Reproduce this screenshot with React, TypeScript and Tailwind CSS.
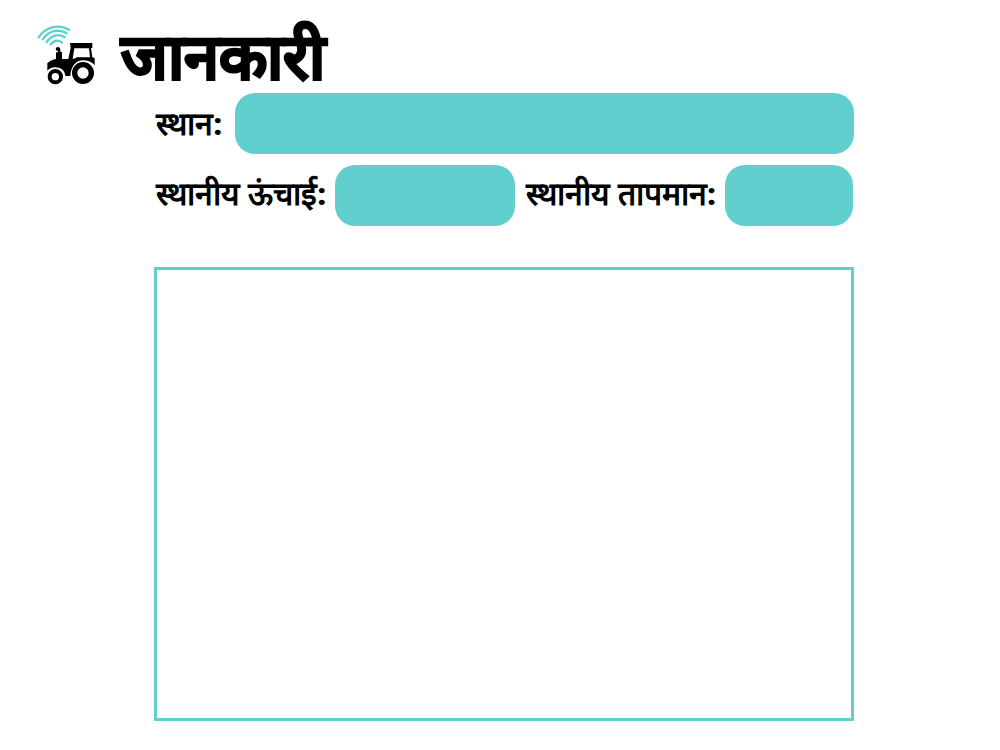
function TractorLogo() {
  return (
    <svg
      viewBox="0 0 225 210"
      className="h-[70px] w-[75px] shrink-0"
      role="img"
      aria-label="ट्रैक्टर"
    >
      <g fill="none" stroke="#61cfce" strokeWidth="7" strokeLinecap="round">
        <path d="M26 52 C46 21 86 11 117 29" />
        <path d="M38 58 C56 32 86 25 110 40" />
        <path d="M50 66 C64 45 85 40 104 52" />
        <path d="M62 73 C72 61 84 58 96 68" />
      </g>
      <path
        fill="#000"
        fillRule="evenodd"
        d="M120 69H187V84H183L187 112L194 114V136C186 126 174 121 159 121C139 121 123 138 121 168H106C104 150 92 142 75 142C65 142 57 146 52 152V130C60 121 70 118 78 117V97H84V92L79 92L77 84L83 81C89 81 91 84 91 90V96H96V117H115L122 84ZM133 85L128 116C131 117 134 116 137 115L139 112H180L177 85Z"
      />
      <circle cx="159" cy="159" r="25" fill="#fff" stroke="#000" strokeWidth="16" />
      <circle cx="76" cy="170" r="17" fill="#fff" stroke="#000" strokeWidth="12" />
    </svg>
  );
}

const labelClass = "shrink-0 whitespace-nowrap pl-0.5 text-[32px] leading-[58px] font-black";
const fieldClass = "h-[61px] rounded-[20px] bg-[#61cfce] px-4 text-2xl outline-none";

export default function App() {
  return (
    <main className="min-h-screen bg-white pb-7 font-['Roboto',sans-serif] text-black">
      <header className="flex h-[93px] items-start gap-4 pt-5 pl-[30px]">
        <TractorLogo />
        <h1 className="text-[63px] leading-[76px] font-black [-webkit-text-stroke:2px_#000]">
          जानकारी
        </h1>
      </header>
      <div className="pr-[146px] pl-[154px]">
        <form className="flex flex-col gap-[11px]">
          <div className="flex items-center gap-3">
            <label htmlFor="place" className={labelClass}>स्थान:</label>
            <input id="place" readOnly className={`${fieldClass} min-w-0 flex-1`} />
          </div>
          <div className="flex justify-between gap-2 pr-px">
            <label htmlFor="altitude" className={labelClass}>स्थानीय ऊंचाई:</label>
            <input id="altitude" readOnly className={`${fieldClass} w-[180px]`} />
            <label htmlFor="temperature" className={labelClass}>स्थानीय तापमान:</label>
            <input id="temperature" readOnly className={`${fieldClass} w-32`} />
          </div>
        </form>
        <section
          aria-label="मानचित्र"
          className="mt-[41px] h-[454px] border-3 border-[#61cfce]"
        />
      </div>
    </main>
  );
}
